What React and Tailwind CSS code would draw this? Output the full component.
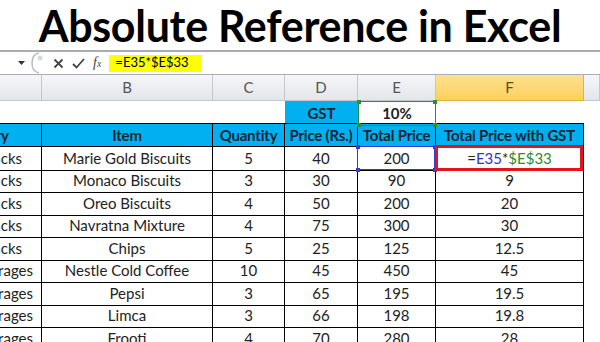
import React from 'react';

const cols = 'grid grid-cols-[42px_171px_72px_73px_78px_148px_16px]';

const rows = [
  ['Snacks', 'Marie Gold Biscuits', '5', '40', '200', null],
  ['Snacks', 'Monaco Biscuits', '3', '30', '90', '9'],
  ['Snacks', 'Oreo Biscuits', '4', '50', '200', '20'],
  ['Snacks', 'Navratna Mixture', '4', '75', '300', '30'],
  ['Snacks', 'Chips', '5', '25', '125', '12.5'],
  ['Beverages', 'Nestle Cold Coffee', '10', '45', '450', '45'],
  ['Beverages', 'Pepsi', '3', '65', '195', '19.5'],
  ['Beverages', 'Limca', '3', '66', '198', '19.8'],
  ['Beverages', 'Frooti', '4', '70', '280', '28'],
];

const Corners = ({ color }) => (
  <>
    <span className={`absolute -left-[2px] -top-[2px] w-[4px] h-[4px] ${color}`} />
    <span className={`absolute -right-[2px] -top-[2px] w-[4px] h-[4px] ${color}`} />
    <span className={`absolute -left-[2px] -bottom-[2px] w-[4px] h-[4px] ${color}`} />
    <span className={`absolute -right-[2px] -bottom-[2px] w-[4px] h-[4px] ${color}`} />
  </>
);

const FormulaBar = () => (
  <div className="flex items-center h-[25px] border-t-2 border-b border-t-[#a9adb3] border-b-[#a9adb3] bg-white">
    <div className="w-[30px] flex justify-end pr-[5px]">
      <svg width="7" height="4" viewBox="0 0 7 4"><path d="M0 0h7L3.5 4z" fill="#333" /></svg>
    </div>
    <svg width="14" height="22" viewBox="0 0 14 22">
      <path d="M9 1C4 2 2 6 2 11s2 9 7 10" fill="none" stroke="#b8bcc2" strokeWidth="1.5" />
      <circle cx="10" cy="6" r="2.5" fill="#d6d9dd" />
    </svg>
    <div className="flex items-center gap-[8px] ml-[9px] text-[#444]">
      <svg width="11" height="11" viewBox="0 0 11 11"><path d="M1.5 1.5l8 8M9.5 1.5l-8 8" stroke="#444" strokeWidth="1.8" /></svg>
      <svg width="13" height="11" viewBox="0 0 13 11"><path d="M1 6l3.5 3.5L12 1" fill="none" stroke="#444" strokeWidth="1.8" /></svg>
      <span className="text-[14px] italic font-['Liberation_Serif',serif] text-[#444] leading-none">f<span className="text-[10px]">x</span></span>
    </div>
    <div className="ml-[8px] w-[93px] h-[17px] bg-[#ffff00] flex items-center pl-[6px] text-[13px] text-black">=E35*$E$33</div>
  </div>
);

const ColHeaders = () => (
  <div className={`${cols} h-[26px] text-[15px] text-[#555]`}>
    {['', 'B', 'C', 'D', 'E', 'F', ''].map((l, i) => (
      <div
        key={i}
        className={
          i === 5
            ? 'flex items-center justify-center bg-gradient-to-b from-[#ffe08f] to-[#fbd05a] border-r border-b border-[#e2b143] text-[#5a4a1e]'
            : 'flex items-center justify-center bg-gradient-to-b from-[#f5f6f8] to-[#e3e6ea] border-r border-b border-[#c3c8ce]'
        }
      >
        {l}
      </div>
    ))}
  </div>
);

export default function App() {
  return (
    <div className="w-[600px] h-[342px] overflow-hidden bg-white font-['Lato',sans-serif]">
      <div className="h-[50px] flex items-center justify-center">
        <h1 className="text-[43px] font-bold text-black leading-none tracking-[-0.3px]">Absolute Reference in Excel</h1>
      </div>
      <FormulaBar />
      <ColHeaders />

      <div className={`${cols} h-[22px] text-[15px] font-bold`}>
        <div /><div /><div />
        <div className="bg-[#00b0f0] flex items-center justify-center text-[#1b2430]">GST</div>
        <div className="relative flex items-center justify-center border border-[#2f8f2f] text-[#222]">
          10%
          <Corners color="bg-[#2f8f2f]" />
        </div>
        <div /><div />
      </div>

      <div className={`${cols} h-[24px] text-[15px] font-bold text-[#1b2430]`}>
        <div className="bg-[#00b0f0] border-y border-r border-black overflow-hidden flex items-center justify-end pr-[32px] whitespace-nowrap">Category</div>
        {['Item', 'Quantity', 'Price (Rs.)', 'Total Price', 'Total Price with GST'].map((h) => (
          <div key={h} className="bg-[#00b0f0] border-y border-r border-black flex items-center justify-center whitespace-nowrap overflow-hidden tracking-[-0.2px]">{h}</div>
        ))}
        <div />
      </div>

      {rows.map((r, i) => (
        <div key={i} className={`${cols} ${i % 2 ? 'h-[23px]' : 'h-[22px]'} text-[15px] text-[#222]`}>
          <div className={`border-b border-r border-black overflow-hidden flex items-center justify-end whitespace-nowrap ${r[0] === 'Snacks' ? 'pr-[19px]' : 'pr-[8px]'}`}>{r[0]}</div>
          <div className="border-b border-r border-black flex items-center justify-center whitespace-nowrap">{r[1]}</div>
          <div className="border-b border-r border-black flex items-center justify-center">{r[2]}</div>
          <div className="border-b border-r border-black flex items-center justify-center">{r[3]}</div>
          {i === 0 ? (
            <div className="relative border-b border-r border-black flex items-center justify-center">
              <div className="absolute -left-px -top-px right-0 bottom-0 border border-[#3a3ad0]" />
              <Corners color="bg-[#3a3ad0]" />
              {r[4]}
            </div>
          ) : (
            <div className="border-b border-r border-black flex items-center justify-center">{r[4]}</div>
          )}
          {i === 0 ? (
            <div className="relative border-b border-r border-black flex items-center justify-center">
              <div className="absolute -left-px -top-[2px] right-0 -bottom-px border-[3px] border-[#e0161e]" />
              <span>=<span className="text-[#3434c4]">E35</span>*<span className="text-[#2f8a2f]">$E$33</span></span>
            </div>
          ) : (
            <div className="border-b border-r border-black flex items-center justify-center">{r[5]}</div>
          )}
          <div />
        </div>
      ))}
    </div>
  );
}
